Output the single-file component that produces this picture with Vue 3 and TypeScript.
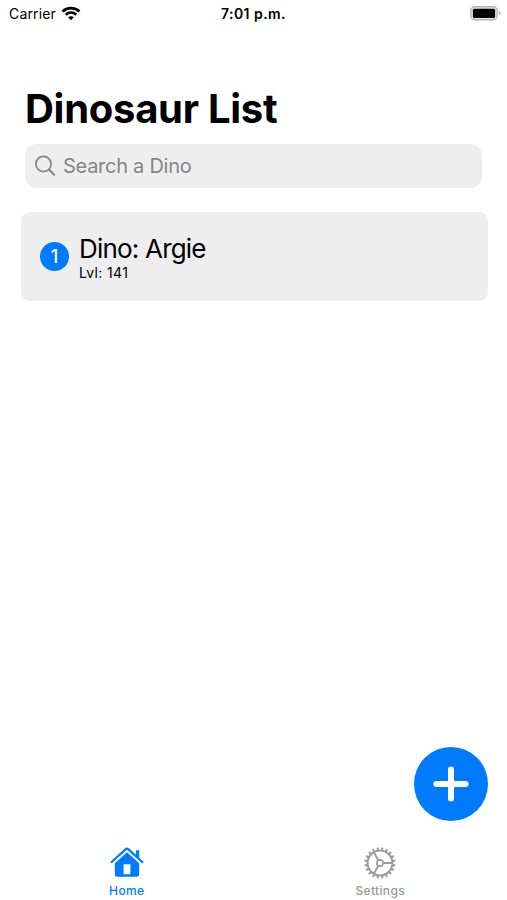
<script setup lang="ts">
import { computed, ref } from 'vue'

interface Dino {
  name: string
  level: number
}

const query = ref('')
const activeTab = ref<'home' | 'settings'>('home')
const dinos = ref<Dino[]>([{ name: 'Argie', level: 141 }])

const visibleDinos = computed(() =>
  dinos.value.filter((d) => d.name.toLowerCase().includes(query.value.toLowerCase())),
)

const teeth = Array.from({ length: 20 }, (_, i) => i * 18 + 9)
const spokes = [0, 120, 240]
</script>

<template>
  <div class="screen">
    <header class="status-bar">
      <div class="carrier">
        <span class="carrier-name">Carrier</span>
        <svg class="wifi" width="20" height="15" viewBox="0 0 20 15" fill="none" stroke="#000" stroke-width="2.7">
          <path d="M1.5 5.4 C6.3 .9 13.7 .9 18.5 5.4" />
          <path d="M4.7 8.7 C7.8 5.9 12.2 5.9 15.3 8.7" />
          <path d="M10 14.2 L7.1 11.3 C8.8 9.8 11.2 9.8 12.9 11.3 Z" fill="#000" stroke="none" />
        </svg>
      </div>
      <time class="clock">7:01 p.m.</time>
      <svg class="battery" width="31" height="15" viewBox="0 0 31 15">
        <rect x=".8" y=".8" width="26.4" height="13" rx="4" fill="#e4e4e4" stroke="#b5b5b5" stroke-width="1.4" />
        <rect x="2.9" y="2.7" width="22.2" height="9.3" rx="1.5" fill="#000" />
        <path d="M28.8 5 Q30.5 5.8 30.5 7.3 Q30.5 8.8 28.8 9.6 Z" fill="#b5b5b5" />
      </svg>
    </header>

    <main class="content">
      <h1 class="title">Dinosaur List</h1>

      <label class="search">
        <svg width="22" height="22" viewBox="0 0 22 22" fill="none" stroke="#858587" stroke-linecap="round">
          <circle cx="8.5" cy="9" r="7.6" stroke-width="1.7" />
          <path d="M14.1 14.6 L19.2 19.7" stroke-width="2.1" />
        </svg>
        <input v-model="query" type="text" placeholder="Search a Dino" />
      </label>

      <ul class="list">
        <li v-for="(dino, index) in visibleDinos" :key="dino.name" class="card">
          <span class="badge">{{ index + 1 }}</span>
          <div class="details">
            <span class="name">Dino: {{ dino.name }}</span>
            <span class="level">Lvl: {{ dino.level }}</span>
          </div>
        </li>
      </ul>
    </main>

    <div class="actions">
      <button class="add" type="button">
        <svg width="36" height="36" viewBox="0 0 36 36" stroke="#fff" stroke-width="6" stroke-linecap="round">
          <path d="M18 3.4 V32.6 M3.4 18 H32.6" />
        </svg>
      </button>
    </div>

    <nav class="tabs">
      <button class="tab" :class="{ active: activeTab === 'home' }" type="button" @click="activeTab = 'home'">
        <svg width="34" height="34" viewBox="0 0 34 34">
          <path
            d="M1.7 16 L15.6 3.3 Q17 2.1 18.4 3.3 L32.3 16"
            fill="none"
            stroke="currentColor"
            stroke-width="2.3"
            stroke-linecap="round"
            stroke-linejoin="round"
          />
          <path d="M26 4.2 H29.2 V12 L26 9.1 Z" fill="currentColor" />
          <path
            fill="currentColor"
            fill-rule="evenodd"
            d="M17 6.3 L29.2 17.3 V28 Q29.2 30.7 26.5 30.7 H7.5 Q4.8 30.7 4.8 28 V17.3 Z M13.6 18.3 V28.2 H20.4 V18.3 Z"
          />
        </svg>
        <span>Home</span>
      </button>
      <button class="tab" :class="{ active: activeTab === 'settings' }" type="button" @click="activeTab = 'settings'">
        <svg width="34" height="34" viewBox="-17 -17 34 34" fill="none" stroke="currentColor">
          <circle r="12.4" stroke-width="1.9" />
          <path v-for="a in teeth" :key="a" d="M12.7 0 H15.6" stroke-width="2" :transform="`rotate(${a})`" />
          <circle r="3.1" stroke-width="1.6" />
          <path v-for="a in spokes" :key="`s${a}`" d="M3.5 0 H12" stroke-width="1.9" :transform="`rotate(${a})`" />
        </svg>
        <span>Settings</span>
      </button>
    </nav>
  </div>
</template>

<style>
body {
  background: #fff;
}
</style>

<style scoped>
.screen {
  display: flex;
  flex-direction: column;
  width: 100%;
  height: 900px;
  overflow: hidden;
  background: #fff;
  color: #000;
  font-family: Inter, 'Liberation Sans', sans-serif;
}

.status-bar {
  display: grid;
  grid-template-columns: 1fr auto 1fr;
  align-items: center;
  height: 27px;
  padding: 0 6px 0 9px;
}

.carrier {
  display: flex;
  align-items: center;
  gap: 5px;
  font-size: 14px;
  letter-spacing: 0.15px;
}

.wifi {
  margin-bottom: 1px;
}

.clock {
  margin-right: 3px;
  font-size: 14px;
  font-weight: 600;
  letter-spacing: 0.45px;
}

.battery {
  justify-self: end;
}

.content {
  flex: 1;
  padding: 57px 19px 0 21px;
}

.title {
  margin: 0 0 10px 4px;
  font-size: 40px;
  font-weight: 700;
  line-height: 50px;
  letter-spacing: -0.28px;
  white-space: nowrap;
}

.search {
  display: flex;
  align-items: center;
  gap: 6px;
  height: 43.5px;
  margin: 0 6px 0 4px;
  padding: 0 10px;
  border-radius: 12px;
  background: #eee;
  box-sizing: border-box;
}

.search input {
  flex: 1;
  min-width: 0;
  padding: 1px 0 0;
  border: 0;
  outline: 0;
  background: transparent;
  color: #000;
  font: inherit;
  font-size: 20px;
  letter-spacing: -0.27px;
}

.search input::placeholder {
  color: #858587;
  opacity: 1;
}

.list {
  margin: 24.5px 0 0;
  padding: 0;
  list-style: none;
}

.card {
  display: flex;
  align-items: center;
  gap: 10px;
  height: 88.5px;
  padding: 0 19px;
  border-radius: 9px;
  background: #eee;
  box-sizing: border-box;
}

.badge {
  display: flex;
  align-items: center;
  justify-content: center;
  width: 29px;
  height: 29px;
  border-radius: 50%;
  background: #007aff;
  color: #fff;
  font-size: 18px;
  font-weight: 500;
}

.details {
  display: flex;
  flex-direction: column;
  padding-top: 2px;
}

.name {
  font-size: 26px;
  line-height: 31px;
  letter-spacing: -0.8px;
}

.level {
  font-size: 14px;
  line-height: 17px;
  letter-spacing: 0.35px;
}

.actions {
  display: flex;
  justify-content: flex-end;
  padding: 0 19px 21px 0;
}

button {
  margin: 0;
  padding: 0;
  border: 0;
  background: none;
  font: inherit;
}

.add {
  display: flex;
  align-items: center;
  justify-content: center;
  width: 74px;
  height: 74px;
  border-radius: 50%;
  background: #007aff;
}

.tabs {
  display: grid;
  grid-template-columns: 1fr 1fr;
  height: 58px;
}

.tab {
  display: flex;
  flex-direction: column;
  align-items: center;
  gap: 3px;
  padding-top: 4px;
  color: #999;
  font-size: 12px;
  font-weight: 500;
  line-height: 15px;
  letter-spacing: 0.35px;
}

.tab.active {
  color: #007aff;
}
</style>
